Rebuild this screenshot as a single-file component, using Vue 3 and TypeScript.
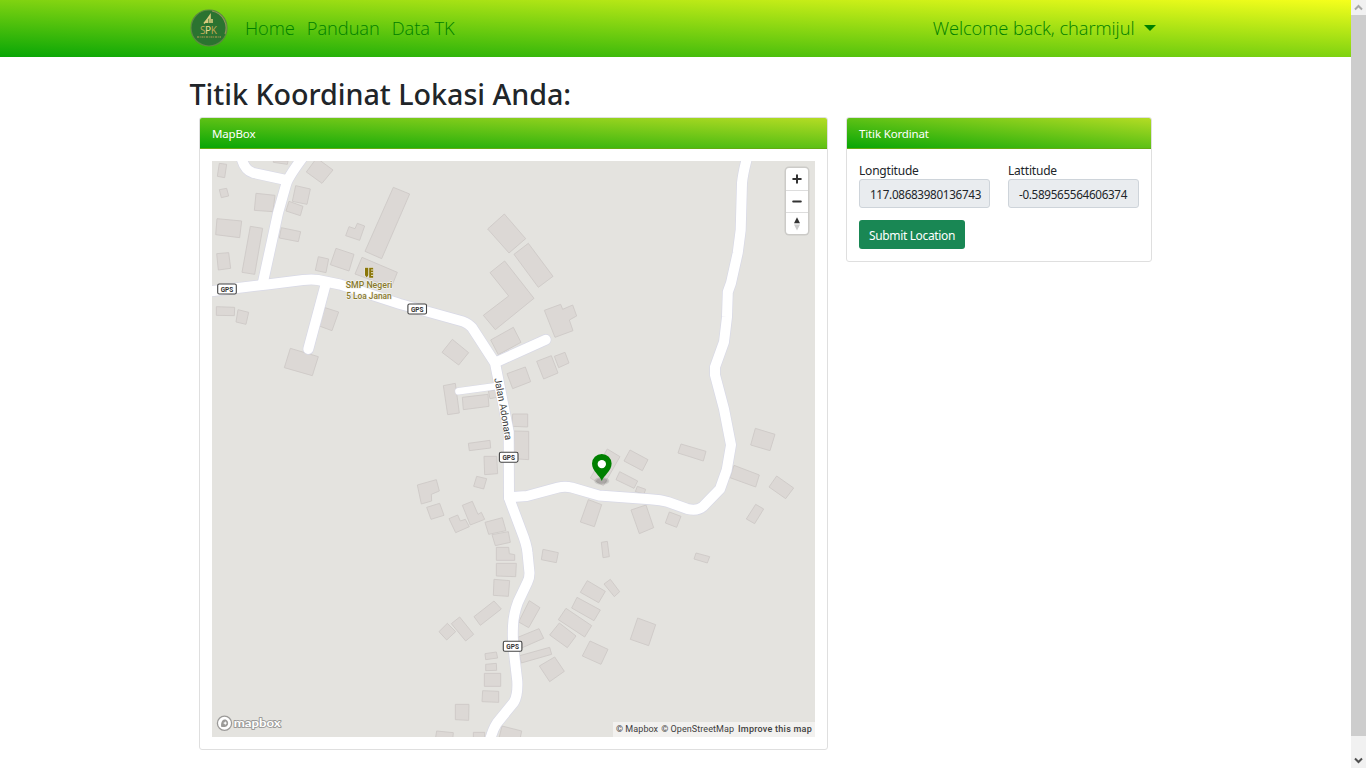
<script setup lang="ts">
interface Tile {
  x: number
  y: number
  shapes: string[]
}

const navLinks: string[] = ['Home', 'Panduan', 'Data TK']

// Building outlines, grouped by map tile; outlines are in thirds of a pixel.
const tiles: Tile[] = [
  {
    x: 200,
    y: 150,
    shapes: [
      '58,40 80,43 74,83 52,79',
      '58,119 80,115 86,138 64,143',
      '51,206 125,213 119,263 47,254',
      '50,311 86,308 92,355 55,360',
      '151,229 188,235 164,373 126,367',
      '168,130 225,136 219,185 163,181',
      '287,107 331,117 321,163 277,154',
      '267,154 309,169 301,197 258,183',
      '244,233 302,245 295,275 238,264',
      '220,33 264,33 262,43 220,37',
      '350,24 399,60 366,100 319,66',
      '580,112 629,132 545,326 495,304',
      '447,230 465,236 472,220 494,228 479,271 437,257',
      '408,295 462,313 447,363 391,344',
      '355,320 386,327 378,368 346,361',
      '486,322 592,367 574,412 465,372',
      '49,470 104,472 103,497 49,496',
      '114,479 146,487 138,523 108,516',
      '375,473 416,486 396,542 355,527',
      '271,595 355,620 337,677 253,653',
    ],
  },
  {
    x: 400,
    y: 170,
    shapes: [
      '313,132 377,206 327,249 263,177',
      '385,220 459,319 415,352 342,253',
      '314,273 402,385 286,479 250,436 326,378 270,308',
      '340,472 363,517 295,554 272,510',
      '157,508 206,548 176,585 126,547',
      '433,421 482,403 488,418 518,405 530,438 508,450 519,482 465,502',
      '410,574 454,557 474,609 431,627',
      '463,559 495,547 507,579 476,593',
      '321,611 376,591 392,635 338,656',
      '130,647 166,640 178,729 143,734',
      '187,682 264,673 267,709 190,719',
      '265,663 290,660 292,682 270,686',
    ],
  },
  {
    x: 420,
    y: 370,
    shapes: [
      '278,132 323,132 323,171 276,169',
      '282,183 326,184 326,269 280,266',
      '145,220 210,211 212,234 148,242',
      '192,259 230,259 233,311 194,314',
      '170,319 200,326 191,357 161,349',
      '-8,345 49,329 58,363 34,373 35,393 4,402',
      '20,412 59,400 72,436 33,448',
      '87,446 113,435 121,453 136,448 148,470 107,488',
      '127,406 157,394 174,433 184,427 194,448 151,465',
      '195,457 247,443 258,482 206,493',
      '216,494 265,485 271,517 226,527',
      '229,532 266,532 268,551 284,554 284,571 229,571',
      '511,324 562,237 600,260 550,347',
      '505,389 545,404 523,470 481,456',
      '544,517 562,514 568,560 549,563',
      '369,538 415,548 409,578 364,569',
    ],
  },
  {
    x: 570,
    y: 410,
    shapes: [
      '180,120 234,149 217,182 162,153',
      '149,185 203,213 192,235 138,209',
      '202,229 227,238 222,252 196,245',
      '333,102 408,124 400,153 324,129',
      '556,55 615,73 600,122 542,105',
      '492,166 568,195 557,231 480,203',
      '620,198 671,234 647,266 597,231',
      '557,283 581,297 554,341 529,327',
      '183,300 228,285 251,353 208,371',
      '298,306 333,319 320,352 286,339',
      '378,429 419,440 412,459 372,447',
    ],
  },
  {
    x: 420,
    y: 530,
    shapes: [
      '229,100 289,100 287,140 229,138',
      '222,148 269,152 265,199 220,196',
      '222,213 244,237 181,286 162,260',
      '119,261 161,313 137,333 94,281',
      '82,280 107,305 80,330 57,305',
      '328,212 360,233 326,293 296,276',
      '286,325 357,296 371,325 307,353',
      '299,377 389,352 395,373 304,399',
      '404,381 433,424 389,455 358,408',
      '502,152 556,184 536,218 481,187',
      '571,148 599,185 583,200 552,162',
      '471,202 541,240 522,272 455,234',
      '438,235 515,287 494,321 415,269',
      '418,279 468,318 442,353 389,315',
      '510,333 564,358 543,403 487,378',
      '653,264 707,284 686,347 631,328',
      '195,371 229,366 233,384 197,389',
      '197,403 229,400 230,421 197,422',
      '193,430 242,430 242,469 193,469',
      '188,482 236,484 236,517 186,515',
      '106,523 147,523 146,571 106,569',
      '50,603 100,608 98,628 46,628',
      '160,607 194,607 194,628 160,628',
      '246,588 305,603 300,628 236,628',
    ],
  },
]

const wideRoads: string[] = [
  'M205,292 L267,284.5 L303,280 Q312,279 318,280 L340,284.5 L400,304 L463,321.5 Q469,324 472,327.5 L495,363 L497,373 L508.7,432 L509,498 L521,530 Q527,545 527.5,553 L529.5,573 Q529.5,578 527.5,582 L518,602 Q513.5,614 513,626 Q512.3,642 514,653 L517.3,681 Q518,695 514,702 L497,723 Q493,729 490,740',
  'M509,497.3 L527,496 L558,487.6 Q565,486 572,487.6 L599,495.5 L650,499.3 Q661,500 668,502 L687,508.8 Q697,511.5 703,506.5 L720,489 L726.7,470 L731,445 L724,409 L715,375 L715,367 L724,342 L727,317 L727.8,292 L731,283 L737.7,253 L740.7,230 L742,183 Q743,173 747,158',
  'M263,282 L278,213 L286.5,183 Q289,176 303,157',
  'M241,156 Q244,170 253,172.8 L286,180',
  'M326,283 L308.3,349',
  'M496.5,362 L545.7,339.7',
]

const shields = [
  { x: 227, y: 289 },
  { x: 417.2, y: 309 },
  { x: 508.7, y: 457.2 },
  { x: 512.6, y: 646.3 },
]

const longitude = '117.08683980136743'
const latitude = '-0.589565564606374'
</script>

<template>
  <div class="page">
    <div class="content">
      <header class="navbar">
        <div class="container nav-inner">
          <svg class="logo" viewBox="0 0 38 38">
            <circle cx="19" cy="19" r="18" fill="#2b7330" stroke="#5c8742" stroke-width="1.2" />
            <path d="M22 2 A17.3 17.3 0 0 1 35 25" fill="none" stroke="#94945a" stroke-width="1.1" />
            <path d="M14 14.5 L16 12 V14 M17.6 14 V10 L20 6.5 V14 M22 14 V10" fill="none" stroke="#d9cb7e" stroke-width="1.6" />
            <text x="10" y="25" textLength="17" font-size="10" fill="#bba657" class="logo-text">S<tspan fill="#e6d98c">P</tspan>K</text>
            <path d="M7 28 H31" stroke="#b29a50" stroke-width="1.3" stroke-dasharray="2 .7 1 .8" opacity=".75" />
          </svg>
          <nav class="links">
            <a v-for="link in navLinks" :key="link">{{ link }}</a>
          </nav>
          <div class="user">
            <span>Welcome back, charmijul</span>
            <i class="caret"></i>
          </div>
        </div>
      </header>

      <main class="container">
        <h2>Titik Koordinat Lokasi Anda:</h2>
        <div class="row">
          <section class="card map-card">
            <div class="card-header">MapBox</div>
            <div class="card-body">
              <div class="map">
                <svg class="map-canvas" viewBox="212 161 603 576">
                  <g v-for="tile in tiles" :key="tile.x + '-' + tile.y" :transform="`translate(${tile.x} ${tile.y}) scale(.33333)`">
                    <polygon v-for="s in tile.shapes" :key="s" :points="s" class="building" />
                  </g>
                  <g class="road casing">
                    <path v-for="r in wideRoads" :key="r" :d="r" />
                    <path d="M458.5,391.3 L497,386" class="narrow" />
                  </g>
                  <g class="road fill">
                    <path v-for="r in wideRoads" :key="r" :d="r" />
                    <path d="M458.5,391.3 L497,386" class="narrow" />
                  </g>
                  <g v-for="s in shields" :key="s.x" :transform="`translate(${s.x} ${s.y})`">
                    <rect x="-9.3" y="-5" width="18.6" height="10" rx="1.6" fill="#fff" stroke="#444" stroke-width="1.1" />
                    <text x="-6.3" y="2.6" textLength="12.6" lengthAdjust="spacingAndGlyphs" class="shield">GPS</text>
                  </g>
                  <path id="street" d="M494.3,378.5 L500,408 L505.3,441" fill="none" />
                  <text class="street"><textPath href="#street" textLength="63" lengthAdjust="spacingAndGlyphs">Jalan Adonara</textPath></text>
                  <g class="poi-icon">
                    <path d="M365 267.7 h3.3 v7.6 l-1.6 2.2 l-1.7 -2.2z M369.2 267.7 h4 v10 h-4z" />
                    <path d="M371 270h2.2M371 272.7h2.2M371 275.4h2.2" stroke="#fff" stroke-width=".8" />
                  </g>
                  <text x="345.8" y="288.4" textLength="46.4" lengthAdjust="spacingAndGlyphs" class="poi">SMP Negeri</text>
                  <text x="346.3" y="299.2" textLength="45.4" lengthAdjust="spacingAndGlyphs" class="poi">5 Loa Janan</text>
                  <g opacity=".22">
                    <ellipse cx="601.8" cy="481" rx="7.5" ry="3.8" opacity=".5" />
                    <ellipse cx="601.8" cy="481" rx="5.8" ry="2.8" />
                    <ellipse cx="601.8" cy="481" rx="4" ry="1.8" />
                  </g>
                  <path d="M601.8 481 C600 476 592 471 592 463.6 A9.8 9.6 0 0 1 611.6 463.6 C611.6 471 603.6 476 601.8 481z" fill="#008000" />
                  <circle cx="601.8" cy="464.1" r="4.2" fill="#fff" />
                  <g>
                    <circle cx="224.5" cy="723.3" r="7.1" fill="#fff" stroke="#9b9a98" stroke-width="1.3" />
                    <path d="M221.1 726.7 C220.5 719.5 224.6 719 226.2 719.8 A3.9 3.9 0 0 1 227 726 C225.6 727.3 223 727 221.1 726.7z" fill="#9b9a98" />
                    <path d="M225.2 720.9 l.7 1.5 1.5.7 -1.5.7 -.7 1.5 -.7-1.5 -1.5-.7 1.5-.7z" fill="#fff" />
                    <text x="233.7" y="726.9" textLength="47" lengthAdjust="spacingAndGlyphs" class="wordmark">mapbox</text>
                  </g>
                </svg>
                <div class="controls">
                  <button type="button"><svg viewBox="0 0 22 22"><path d="M11 7.2v7.6M7.2 11h7.6" stroke="#333" stroke-width="2" stroke-linecap="round" /></svg></button>
                  <button type="button"><svg viewBox="0 0 22 22"><path d="M7.2 10.5h7.6" stroke="#333" stroke-width="2" stroke-linecap="round" /></svg></button>
                  <button type="button"><svg viewBox="0 0 22 22"><path d="M8 10.2l3-6 3 6z" fill="#333" /><path d="M8 11.5l3 6 3-6z" fill="#ccc" /></svg></button>
                </div>
                <div class="attribution"><span>© Mapbox</span><span>© OpenStreetMap</span><b>Improve this map</b></div>
              </div>
            </div>
          </section>

          <section class="card form-card">
            <div class="card-header">Titik Kordinat</div>
            <div class="card-body">
              <div class="fields">
                <label><span class="name">Longtitude</span><span class="input">{{ longitude }}</span></label>
                <label><span class="name">Lattitude</span><span class="input">{{ latitude }}</span></label>
              </div>
              <button type="button" class="submit">Submit Location</button>
            </div>
          </section>
        </div>
      </main>
    </div>

    <aside class="scrollbar">
      <svg class="arrow" viewBox="0 0 15 15"><path d="M4 9.5l3.5-3.5 3.5 3.5" fill="none" stroke="#a8a8a8" stroke-width="2" /></svg>
      <div class="thumb"></div>
      <svg class="arrow end" viewBox="0 0 15 15"><path d="M4 5.5l3.5 3.5 3.5-3.5" fill="none" stroke="#505050" stroke-width="2" /></svg>
    </aside>
  </div>
</template>

<style>
html,
body {
  margin: 0;
  overflow: hidden;
  background: #fff;
}
</style>

<style scoped>
* {
  box-sizing: border-box;
}
.page {
  display: flex;
  width: 1366px;
  height: 768px;
  font-family: "Segoe UI", "Noto Sans", sans-serif;
  font-size: 12px;
  color: #212529;
}
.content {
  flex: 1;
}
.container {
  width: 972px;
  margin: 0 0 0 189.5px;
}
.navbar {
  height: 57px;
  background: linear-gradient(to top right, #08a606, #f6ff1c);
}
.nav-inner {
  display: flex;
  align-items: center;
  height: 56px;
}
.logo {
  width: 38px;
  height: 38px;
}
.logo-text {
  font-family: "Noto Sans", sans-serif;
}
.links {
  display: flex;
  gap: 12px;
  margin-left: 17.5px;
}
.links a,
.user {
  font-family: "Segoe UI", "Open Sans", "Noto Sans", sans-serif;
  font-size: 18.3px;
  font-weight: 350;
  letter-spacing: -0.06px;
  line-height: 28px;
  color: green;
  white-space: nowrap;
}
.user {
  display: flex;
  align-items: center;
  margin-left: auto;
  margin-right: 6px;
}
.caret {
  margin-left: 9px;
  border: 6px solid transparent;
  border-top-color: green;
  border-bottom: 0;
}
h2 {
  margin: 18px 0 5px;
  font-size: 28.7px;
  line-height: 37px;
  font-weight: 500;
  letter-spacing: -0.03px;
  white-space: nowrap;
}
.row {
  display: flex;
  align-items: flex-start;
  gap: 18px;
  margin-left: 9.5px;
}
.card {
  border: 1px solid #dfdfdf;
  border-radius: 3px;
  overflow: hidden;
  background: #fff;
}
.map-card {
  width: 629px;
  height: 633px;
}
.form-card {
  width: 306px;
  height: 145px;
}
.card-header {
  height: 31px;
  padding: 0 12px;
  line-height: 31px;
  font-size: 11.5px;
  letter-spacing: -0.15px;
  color: #fff;
  background: linear-gradient(to top right, #08a606, #b4dc24);
  border-bottom: 1px solid #62ac10;
}
.card-body {
  padding: 12px;
}
.map {
  position: relative;
  width: 603px;
  height: 576px;
  background: #e4e3df;
}
.map-canvas {
  display: block;
  width: 603px;
  height: 576px;
}
.building {
  fill: #dcd8d5;
  stroke: #cdc9c6;
  stroke-width: 2.6;
}
.road path {
  fill: none;
  stroke-linecap: round;
  stroke-linejoin: round;
}
.casing path {
  stroke: #d8d9e6;
  stroke-width: 11.4;
}
.casing .narrow {
  stroke-width: 7.6;
}
.fill path {
  stroke: #fff;
  stroke-width: 10;
}
.fill .narrow {
  stroke-width: 6.6;
}
.shield {
  font: 700 7.4px "Roboto", sans-serif;
  fill: #333;
}
.street,
.poi {
  font-family: "Roboto", sans-serif;
  font-size: 10px;
  paint-order: stroke;
  stroke-linejoin: round;
}
.street {
  fill: #3c3c3c;
  stroke: #fff;
  stroke-width: 1;
}
.poi {
  font-size: 9px;
  font-weight: 500;
  fill: #88792c;
  stroke: #f4f3ef;
  stroke-width: 1.4;
}
.poi-icon {
  fill: #8a7609;
  stroke: #f4f3ef;
  stroke-width: 0.7;
  paint-order: stroke;
}
.wordmark {
  font: 700 12px "Lato", sans-serif;
  fill: #fff;
  stroke: #9b9a98;
  stroke-width: 1.8;
  stroke-linejoin: round;
  paint-order: stroke;
}
.controls {
  position: absolute;
  top: 7px;
  right: 7px;
  width: 22px;
  border-radius: 3px;
  background: #fff;
  box-shadow: 0 0 0 1.5px rgba(0, 0, 0, 0.1);
}
.controls button {
  display: block;
  width: 22px;
  height: 22px;
  padding: 0;
  border: 0;
  background: none;
}
.controls button + button {
  border-top: 1px solid #ddd;
}
.controls svg {
  display: block;
  width: 22px;
  height: 22px;
}
.attribution {
  position: absolute;
  right: 0;
  bottom: 0;
  display: flex;
  gap: 3px;
  height: 15px;
  padding: 0 3px;
  background: rgba(255, 255, 255, 0.5);
  font: 9px/15px "Roboto", sans-serif;
  letter-spacing: 0.07px;
  color: #404040;
  white-space: nowrap;
}
.attribution b {
  font-weight: 500;
  margin-left: 1px;
  letter-spacing: 0.25px;
}
.fields {
  display: flex;
  gap: 18px;
}
.fields label {
  width: 131px;
}
.name,
.input {
  display: block;
}
.name {
  padding-top: 1px;
  line-height: 17px;
  letter-spacing: -0.2px;
}
.input {
  height: 29px;
  padding: 0 0 0 10px;
  border: 1px solid #ced4da;
  border-radius: 3px;
  background: #e9ecef;
  line-height: 29px;
  font-size: 11.7px;
  letter-spacing: -0.32px;
  white-space: nowrap;
}
.submit {
  display: block;
  width: 106px;
  height: 29px;
  margin-top: 12px;
  padding: 2px 0 0;
  border: 0;
  border-radius: 3px;
  background: #198754;
  color: #fff;
  font-family: inherit;
  font-size: 12px;
  letter-spacing: -0.35px;
  white-space: nowrap;
}
.scrollbar {
  display: flex;
  flex-direction: column;
  width: 15px;
  background: #f1f1f1;
}
.arrow {
  width: 15px;
  height: 15px;
}
.thumb {
  height: 721px;
  background: #cdcdcd;
}
.end {
  margin-top: auto;
}
</style>
